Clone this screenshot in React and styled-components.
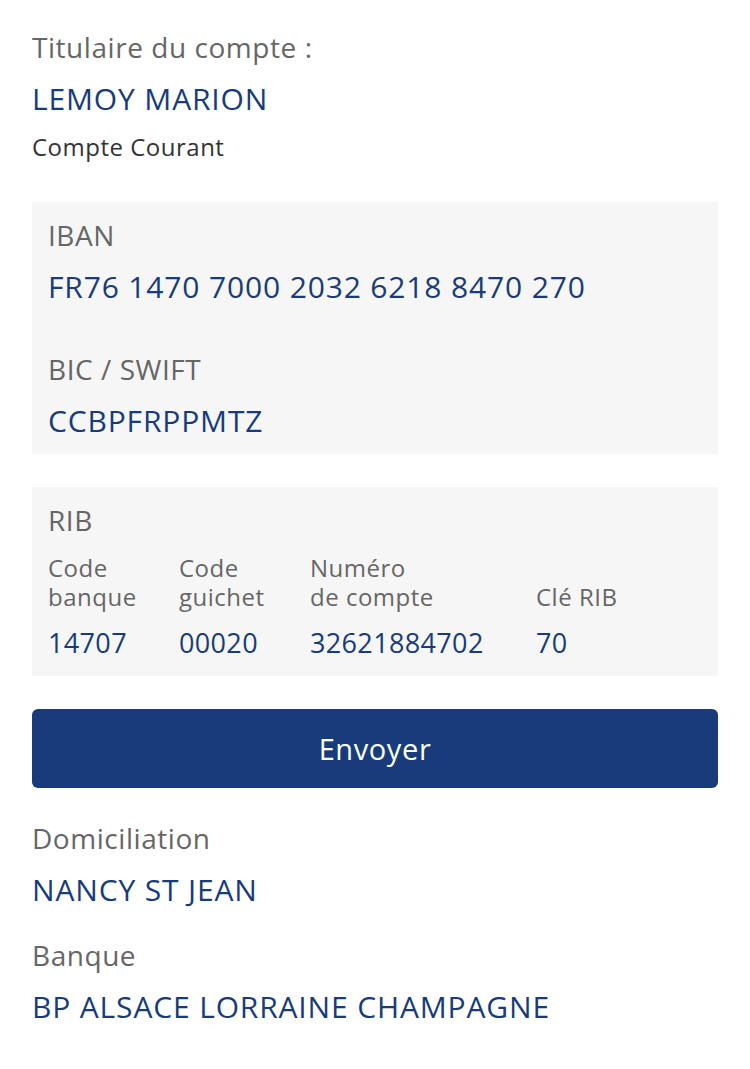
import React from "react";
import styled, { createGlobalStyle } from "styled-components";

const Global = createGlobalStyle`
  html, body { margin: 0; padding: 0; background: #fff; }
  body { font-family: "Open Sans", "Noto Sans", sans-serif; -webkit-font-smoothing: antialiased; }
`;

const Page = styled.div`
  width: 750px;
  box-sizing: border-box;
  padding: 21px 32px 40px;
  display: flex;
  flex-direction: column;
`;

const Label = styled.div`
  font-size: 28px;
  line-height: 52px;
  color: #666666;
  margin-top: ${(p) => p.$mt || 0}px;
  letter-spacing: 0.55px;
`;

const Value = styled.div`
  font-size: 30px;
  line-height: 52px;
  color: #173b7c;
  letter-spacing: 0.85px;
`;

const Sub = styled.div`
  font-size: 24px;
  line-height: 40px;
  color: #333333;
  margin-top: 2px;
  letter-spacing: 0.5px;
`;

const Card = styled.div`
  background: #f6f6f6;
  padding: ${(p) => p.$pad};
  margin-top: ${(p) => p.$mt}px;
  display: flex;
  flex-direction: column;
`;

const RibGrid = styled.div`
  display: grid;
  grid-template-columns: 131px 131px 226px 1fr;
  margin-top: 7px;
`;

const Head = styled.div`
  font-size: 24px;
  line-height: 29px;
  color: #666666;
  align-self: end;
  letter-spacing: 0.5px;
`;

const Num = styled.div`
  font-size: 27px;
  line-height: 40px;
  color: #173b7c;
  margin-top: 12px;
  letter-spacing: 0.35px;
`;

const Button = styled.button`
  margin-top: 33px;
  height: 79px;
  border: none;
  border-radius: 6px;
  background: #173b7b;
  color: #ffffff;
  font-family: inherit;
  font-size: 29px;
  letter-spacing: 0.6px;
  cursor: pointer;
`;

export default function App() {
  return (
    <>
      <Global />
      <Page>
        <Label>Titulaire du compte :</Label>
        <Value>LEMOY MARION</Value>
        <Sub>Compte Courant</Sub>

        <Card $mt={35} $pad="7px 16px">
          <Label>IBAN</Label>
          <Value>FR76 1470 7000 2032 6218 8470 270</Value>
          <Label $mt={30}>BIC / SWIFT</Label>
          <Value>CCBPFRPPMTZ</Value>
        </Card>

        <Card $mt={33} $pad="7px 16px 13px">
          <Label>RIB</Label>
          <RibGrid>
            <Head>Code<br />banque</Head>
            <Head>Code<br />guichet</Head>
            <Head>Numéro<br />de compte</Head>
            <Head>Clé RIB</Head>
            <Num>14707</Num>
            <Num>00020</Num>
            <Num>32621884702</Num>
            <Num>70</Num>
          </RibGrid>
        </Card>

        <Button type="button">Envoyer</Button>

        <Label $mt={24}>Domiciliation</Label>
        <Value>NANCY ST JEAN</Value>
        <Label $mt={13}>Banque</Label>
        <Value>BP ALSACE LORRAINE CHAMPAGNE</Value>
      </Page>
    </>
  );
}
